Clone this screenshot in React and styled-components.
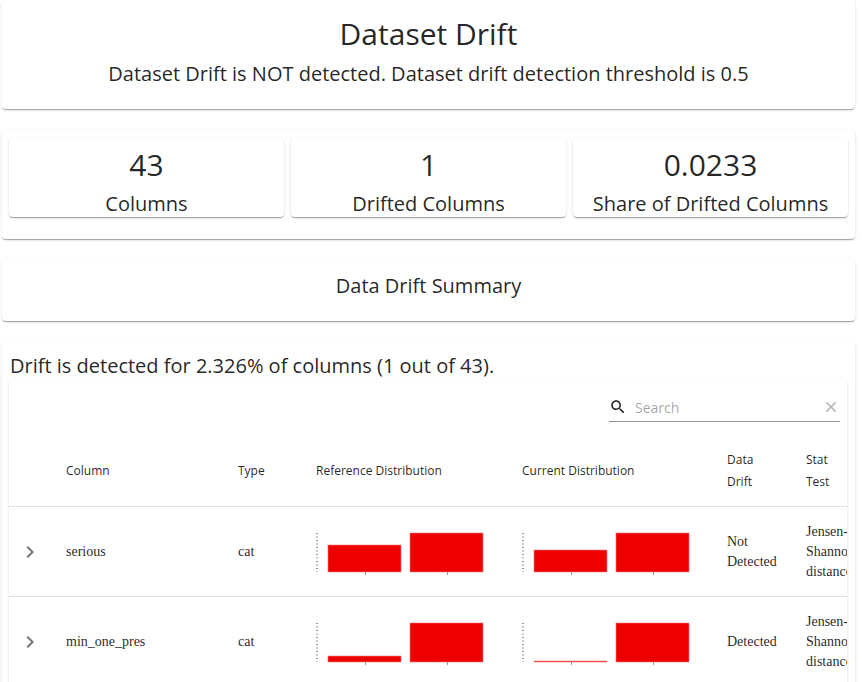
import React from "react";
import styled, { createGlobalStyle } from "styled-components";

const GlobalStyle = createGlobalStyle`
  body {
    margin: 0;
    background: #fff;
    font-family: "Open Sans", "Noto Sans", sans-serif;
    color: rgba(0, 0, 0, 0.87);
  }
`;

const shadow = `0px 2px 1px -1px rgba(0,0,0,0.2), 0px 1px 1px 0px rgba(0,0,0,0.14), 0px 1px 3px 0px rgba(0,0,0,0.12)`;

const Page = styled.div`
  display: flex;
  flex-direction: column;
  gap: 21px;
  padding: 0 7px 0 2px;
`;

const Paper = styled.div`
  background: #fff;
  box-shadow: ${shadow};
  border-radius: 4px;
`;

const HeaderCard = styled(Paper)`
  padding: 14px 0 21px;
  text-align: center;
`;

const Title = styled.h1`
  margin: 0;
  font-size: 30px;
  font-weight: 400;
  line-height: 40px;
`;

const Subtitle = styled.div`
  margin-top: 6px;
  font-size: 20px;
  line-height: 28px;
`;

const StatsCard = styled(Paper)`
  display: grid;
  grid-template-columns: repeat(3, 1fr);
  gap: 7px;
  padding: 8px 7px 22px;
`;

const Stat = styled(Paper)`
  text-align: center;
  padding-top: 7px;
  height: 79px;
  box-sizing: border-box;
`;

const StatValue = styled.div`
  font-size: 30px;
  line-height: 40px;
`;

const StatLabel = styled.div`
  margin-top: 5px;
  font-size: 20px;
  line-height: 28px;
`;

const SummaryCard = styled(Paper)`
  padding: 12px 0 21px;
  text-align: center;
  font-size: 20px;
  line-height: 28px;
`;

const DetailCard = styled(Paper)`
  padding: 10px 0 0 7px;
`;

const DetailText = styled.div`
  font-size: 20px;
  line-height: 28px;
  padding-left: 1px;
`;

const TablePaper = styled(Paper)`
  overflow: hidden;
  width: 838px;
`;

const Toolbar = styled.div`
  display: flex;
  justify-content: flex-end;
  height: 55px;
  padding: 13px 7px 0 0;
  box-sizing: border-box;
`;

const SearchField = styled.div`
  display: flex;
  align-items: center;
  width: 231px;
  height: 28px;
  border-bottom: 1px solid rgba(0, 0, 0, 0.42);
  color: rgba(0, 0, 0, 0.87);
  svg {
    flex: none;
  }
`;

const SearchInput = styled.span`
  flex: 1;
  padding-left: 8px;
  font-size: 14px;
  color: rgba(0, 0, 0, 0.38);
`;

const Table = styled.table`
  border-collapse: collapse;
  table-layout: fixed;
  width: 857px;
`;

const HeadCell = styled.th`
  text-align: left;
  font-weight: 400;
  font-size: 12px;
  line-height: 22px;
  padding: 0 16px;
  height: 71px;
  border-bottom: 1px solid rgba(224, 224, 224, 1);
`;

const Cell = styled.td`
  font-family: "Liberation Serif", serif;
  font-size: 14px;
  line-height: 20px;
  padding: 1px 16px 0;
  height: 88px;
  vertical-align: middle;
  border-bottom: 1px solid rgba(224, 224, 224, 1);
  color: rgba(0, 0, 0, 0.87);
`;

const ExpandCell = styled(Cell)`
  padding: 1px 0 0 9px;
  svg {
    display: block;
  }
`;

const Chart = styled.svg`
  display: block;
`;

const SearchIcon = () => (
  <svg width="18" height="18" viewBox="0 0 24 24" fill="currentColor">
    <path d="M15.5 14h-.79l-.28-.27C15.41 12.59 16 11.11 16 9.5 16 5.91 13.09 3 9.5 3S3 5.91 3 9.5 5.91 16 9.5 16c1.61 0 3.09-.59 4.23-1.57l.27.28v.79l5 4.99L20.49 19l-4.99-5zm-6 0C7.01 14 5 11.99 5 9.5S7.01 5 9.5 5 14 7.01 14 9.5 11.99 14 9.5 14z" />
  </svg>
);

const ClearIcon = () => (
  <svg width="18" height="18" viewBox="0 0 24 24" fill="rgba(0,0,0,0.3)">
    <path d="M19 6.41 17.59 5 12 10.59 6.41 5 5 6.41 10.59 12 5 17.59 6.41 19 12 13.41 17.59 19 19 17.59 13.41 12z" />
  </svg>
);

const ArrowRight = () => (
  <svg width="24" height="24" viewBox="0 0 24 24" fill="rgba(0,0,0,0.54)">
    <path d="M8.59 16.59 13.17 12 8.59 7.41 10 6l6 6-6 6-1.41-1.41z" />
  </svg>
);

// bar heights are in pixels of a 39px plot
const BarChart = ({ bars }) => (
  <Chart width="172" height="50" viewBox="0 0 172 50">
    <line x1="1" y1="6" x2="1" y2="45" stroke="#999" strokeWidth="2" strokeDasharray="1 2.5" />
    {bars.map((h, i) => {
      const x = 12 + i * 82;
      return (
        <g key={i}>
          <rect x={x} y={45 - h} width="73" height={h} fill="#ee0000" stroke="#f47a7a" strokeWidth="0.6" />
          <line x1={x + 37.5} y1="45" x2={x + 37.5} y2="48" stroke="#999" strokeWidth="1" />
        </g>
      );
    })}
  </Chart>
);

const rows = [
  { name: "serious", type: "cat", ref: [27, 39], cur: [22, 39], drift: "Not Detected", test: "Jensen-Shannon distance" },
  { name: "min_one_pres", type: "cat", ref: [6, 39], cur: [1, 39], drift: "Detected", test: "Jensen-Shannon distance" },
];

const widths = [41, 172, 78, 206, 205, 79, 76];

export default function App() {
  return (
    <>
      <GlobalStyle />
      <Page>
        <HeaderCard>
          <Title>Dataset Drift</Title>
          <Subtitle>Dataset Drift is NOT detected. Dataset drift detection threshold is 0.5</Subtitle>
        </HeaderCard>
        <StatsCard>
          <Stat>
            <StatValue>43</StatValue>
            <StatLabel>Columns</StatLabel>
          </Stat>
          <Stat>
            <StatValue>1</StatValue>
            <StatLabel>Drifted Columns</StatLabel>
          </Stat>
          <Stat>
            <StatValue>0.0233</StatValue>
            <StatLabel>Share of Drifted Columns</StatLabel>
          </Stat>
        </StatsCard>
        <SummaryCard>Data Drift Summary</SummaryCard>
        <DetailCard>
          <DetailText>Drift is detected for 2.326% of columns (1 out of 43).</DetailText>
          <TablePaper>
            <Toolbar>
              <SearchField>
                <SearchIcon />
                <SearchInput>Search</SearchInput>
                <ClearIcon />
              </SearchField>
            </Toolbar>
            <Table>
              <colgroup>
                {widths.map((w, i) => (
                  <col key={i} style={{ width: w }} />
                ))}
              </colgroup>
              <thead>
                <tr>
                  <HeadCell />
                  <HeadCell>Column</HeadCell>
                  <HeadCell>Type</HeadCell>
                  <HeadCell>Reference Distribution</HeadCell>
                  <HeadCell>Current Distribution</HeadCell>
                  <HeadCell>Data Drift</HeadCell>
                  <HeadCell>Stat Test</HeadCell>
                </tr>
              </thead>
              <tbody>
                {rows.map((r) => (
                  <tr key={r.name}>
                    <ExpandCell>
                      <ArrowRight />
                    </ExpandCell>
                    <Cell>{r.name}</Cell>
                    <Cell>{r.type}</Cell>
                    <Cell>
                      <BarChart bars={r.ref} />
                    </Cell>
                    <Cell>
                      <BarChart bars={r.cur} />
                    </Cell>
                    <Cell>{r.drift}</Cell>
                    <Cell>{r.test}</Cell>
                  </tr>
                ))}
              </tbody>
            </Table>
          </TablePaper>
        </DetailCard>
      </Page>
    </>
  );
}
